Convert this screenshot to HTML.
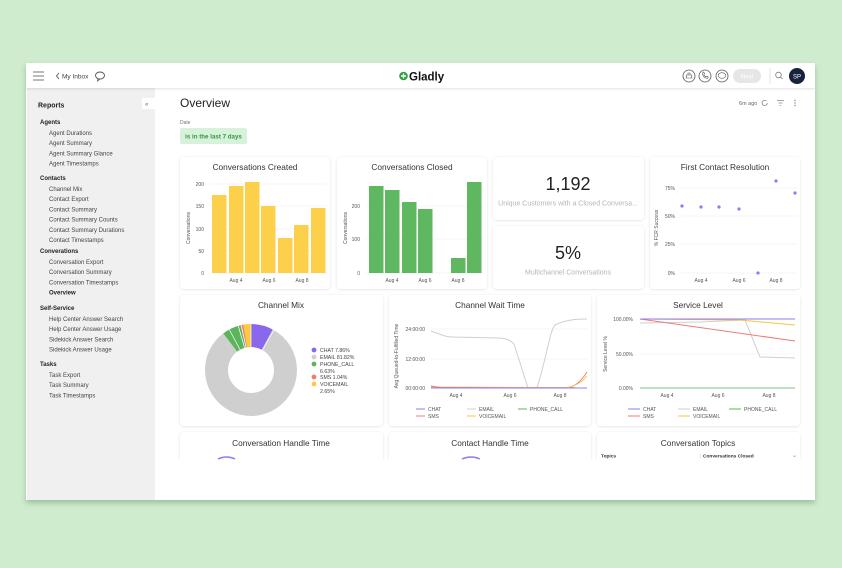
<!DOCTYPE html>
<html><head><meta charset="utf-8"><style>
html,body{margin:0;padding:0;background:#cfecce;width:842px;height:568px;overflow:hidden}
svg{display:block;font-family:"Liberation Sans",sans-serif}
</style></head><body>
<svg width="842" height="568" viewBox="0 0 842 568" xmlns="http://www.w3.org/2000/svg">
<defs>
<filter id="ws" x="-5%" y="-5%" width="110%" height="115%"><feDropShadow dx="0" dy="3" stdDeviation="3" flood-color="#5a8a5a" flood-opacity="0.45"/></filter>
<filter id="cs" x="-5%" y="-5%" width="110%" height="110%"><feDropShadow dx="0" dy="0.5" stdDeviation="1.2" flood-color="#000" flood-opacity="0.13"/></filter>
<filter id="ts" x="0" y="0" width="100%" height="200%"><feDropShadow dx="0" dy="1" stdDeviation="1.2" flood-color="#000" flood-opacity="0.12"/></filter>
</defs>
<rect width="842" height="568" rx="14" fill="#cfecce"/>
<!-- window -->
<rect x="26" y="63" width="789" height="437" fill="#fff" filter="url(#ws)"/>
<rect x="27" y="88" width="128" height="412" fill="#f0f0f0"/>
<!-- top bar -->
<rect x="26" y="63" width="789" height="25" fill="#fff" filter="url(#ts)"/>
<g stroke="#777" stroke-width="1"><line x1="33" y1="72" x2="44" y2="72"/><line x1="33" y1="76" x2="44" y2="76"/><line x1="33" y1="80" x2="44" y2="80"/></g>
<path d="M59 73 L56.5 76 L59 79" fill="none" stroke="#555" stroke-width="0.9"/>
<text x="62" y="78.5" font-size="6.5" fill="#444">My Inbox</text>
<ellipse cx="100" cy="75.5" rx="4.5" ry="3.5" fill="none" stroke="#555" stroke-width="0.9"/>
<path d="M98 78.5 L97.5 81 L100 79" fill="none" stroke="#555" stroke-width="0.8"/>
<circle cx="403.5" cy="76" r="4.3" fill="#2e9e3e"/>
<path d="M401 76 H406 M403.5 73.5 V78.5" stroke="#fff" stroke-width="1.4"/>
<text x="409" y="80.5" font-size="11.5" font-weight="bold" fill="#111">Gladly</text>
<g fill="none" stroke="#555" stroke-width="0.8"><circle cx="689" cy="76" r="6"/><circle cx="705" cy="76" r="6"/><circle cx="722" cy="76" r="6"/></g>
<path d="M685.5 78 h7 M686.5 78 v-3 h5 v3 M688 75 v-2 h2 v2" fill="none" stroke="#555" stroke-width="0.6"/>
<path d="M702.5 73 c0 3 2 5 5 5.5 l0.8-1.5 -1.5-1 -1 .8 c-1-.5-1.7-1.3-2-2.3 l.8-1 -1-1.5z" fill="none" stroke="#555" stroke-width="0.6"/>
<ellipse cx="722" cy="75.5" rx="3.8" ry="2.8" fill="none" stroke="#555" stroke-width="0.6"/>
<rect x="733" y="69" width="28" height="14" rx="7" fill="#e6e6e6"/>
<text x="747" y="78.5" font-size="6" fill="#fff" text-anchor="middle">Next</text>
<line x1="770" y1="68" x2="770" y2="84" stroke="#e3e3e3"/>
<circle cx="778.5" cy="75" r="2.8" fill="none" stroke="#777" stroke-width="0.8"/><line x1="780.5" y1="77" x2="782.5" y2="79" stroke="#777" stroke-width="0.8"/>
<circle cx="797" cy="76" r="8" fill="#18223d"/>
<text x="797" y="78.3" font-size="6" fill="#fff" text-anchor="middle">SP</text>
<!-- sidebar -->
<g font-size="6" fill="#444">
<text x="38" y="107.5" font-size="7" font-weight="bold" fill="#222">Reports</text>
<rect x="142" y="98" width="13" height="11" fill="#fff"/>
<text x="145" y="106" font-size="6" fill="#666">«</text>
<g font-weight="bold" fill="#222" font-size="6"><text x="40" y="124">Agents</text><text x="40" y="180">Contacts</text><text x="40" y="253">Converations</text><text x="40" y="310">Self-Service</text><text x="40" y="366">Tasks</text></g>
<text x="49" y="135">Agent Durations</text><text x="49" y="145.2">Agent Summary</text><text x="49" y="155.4">Agent Summary Glance</text><text x="49" y="165.6">Agent Timestamps</text>
<text x="49" y="191">Channel Mix</text><text x="49" y="201.2">Contact Export</text><text x="49" y="211.4">Contact Summary</text><text x="49" y="221.6">Contact Summary Counts</text><text x="49" y="231.8">Contact Summary Durations</text><text x="49" y="242">Contact Timestamps</text>
<text x="49" y="264">Conversation Export</text><text x="49" y="274.2">Conversation Summary</text><text x="49" y="284.4">Conversation Timestamps</text><text x="49" y="294.6" font-weight="bold" fill="#222">Overview</text>
<text x="49" y="321">Help Center Answer Search</text><text x="49" y="331.2">Help Center Answer Usage</text><text x="49" y="341.4">Sidekick Answer Search</text><text x="49" y="351.6">Sidekick Answer Usage</text>
<text x="49" y="377">Task Export</text><text x="49" y="387.2">Task Summary</text><text x="49" y="397.4">Task Timestamps</text>
</g>
<!-- header -->
<text x="180" y="107" font-size="12" fill="#222">Overview</text>
<text x="180" y="124" font-size="5" fill="#777">Date</text>
<rect x="180" y="128" width="67" height="16" rx="2" fill="#d8f1da"/>
<text x="213.5" y="138.5" font-size="6.2" fill="#2e9a3e" text-anchor="middle" font-weight="bold">is in the last 7 days</text>
<text x="739" y="105" font-size="5.5" fill="#666">6m ago</text>
<path d="M766.5 101 a2.6 2.6 0 1 0 .8 2" fill="none" stroke="#777" stroke-width="0.7"/>
<path d="M777 100.5 h7 M778.5 103 h4 M779.8 105.5 h1.4" stroke="#888" stroke-width="0.7"/>
<g fill="#888"><circle cx="795" cy="100.5" r="0.7"/><circle cx="795" cy="103" r="0.7"/><circle cx="795" cy="105.5" r="0.7"/></g>
<!-- cards -->
<g fill="#fff" filter="url(#cs)">
<rect x="180" y="157" width="150" height="132" rx="4"/><rect x="337" y="157" width="150" height="132" rx="4"/>
<rect x="493" y="157" width="151" height="63" rx="4"/><rect x="493" y="226" width="151" height="63" rx="4"/>
<rect x="650" y="157" width="150" height="132" rx="4"/>
<rect x="180" y="295" width="203" height="131" rx="4"/><rect x="389" y="295" width="202" height="131" rx="4"/><rect x="597" y="295" width="203" height="131" rx="4"/>
<rect x="180" y="432" width="203" height="40" rx="4"/><rect x="389" y="432" width="202" height="40" rx="4"/><rect x="597" y="432" width="203" height="40" rx="4"/>
</g>
<rect x="156" y="459" width="659" height="41" fill="#fff"/>
<g font-size="8.3" fill="#333" text-anchor="middle">
<text x="255" y="170">Conversations Created</text><text x="412" y="170">Conversations Closed</text><text x="725" y="170">First Contact Resolution</text>
<text x="281" y="308">Channel Mix</text><text x="490" y="308">Channel Wait Time</text><text x="698" y="308">Service Level</text>
<text x="281" y="446">Conversation Handle Time</text><text x="490" y="446">Contact Handle Time</text><text x="698" y="446">Conversation Topics</text>
</g>
<!-- card1 -->
<g stroke="#eee" stroke-width="0.6"><line x1="210" y1="184" x2="327" y2="184"/><line x1="210" y1="206" x2="327" y2="206"/><line x1="210" y1="229" x2="327" y2="229"/><line x1="210" y1="251" x2="327" y2="251"/><line x1="210" y1="273" x2="327" y2="273"/></g>
<g font-size="5" fill="#555" text-anchor="end"><text x="204" y="186">200</text><text x="204" y="208">150</text><text x="204" y="231">100</text><text x="204" y="253">50</text><text x="204" y="275">0</text></g>
<text transform="translate(190,228) rotate(-90)" font-size="5" fill="#555" text-anchor="middle">Conversations</text>
<g fill="#fdd04b"><rect x="212" y="195" width="14.5" height="78"/><rect x="229" y="186" width="14.5" height="87"/><rect x="245" y="182" width="14.5" height="91"/><rect x="261" y="206" width="14.5" height="67"/><rect x="278" y="238" width="14.5" height="35"/><rect x="294" y="225" width="14.5" height="48"/><rect x="311" y="208" width="14.5" height="65"/></g>
<g font-size="5" fill="#555" text-anchor="middle"><text x="236" y="282">Aug 4</text><text x="269" y="282">Aug 6</text><text x="302" y="282">Aug 8</text></g>
<!-- card2 -->
<g stroke="#eee" stroke-width="0.6"><line x1="366" y1="206" x2="484" y2="206"/><line x1="366" y1="239" x2="484" y2="239"/><line x1="366" y1="273" x2="484" y2="273"/></g>
<g font-size="5" fill="#555" text-anchor="end"><text x="360" y="208">200</text><text x="360" y="241">100</text><text x="360" y="275">0</text></g>
<text transform="translate(347,228) rotate(-90)" font-size="5" fill="#555" text-anchor="middle">Conversations</text>
<g fill="#5fb760"><rect x="369" y="186" width="14.5" height="87"/><rect x="385" y="190" width="14.5" height="83"/><rect x="402" y="202" width="14.5" height="71"/><rect x="418" y="209" width="14.5" height="64"/><rect x="451" y="258" width="14.5" height="15"/><rect x="467" y="182" width="14.5" height="91"/></g>
<g font-size="5" fill="#555" text-anchor="middle"><text x="392" y="282">Aug 4</text><text x="425" y="282">Aug 6</text><text x="458" y="282">Aug 8</text></g>
<!-- card3 -->
<text x="568" y="190" font-size="18" fill="#222" text-anchor="middle">1,192</text>
<text x="568" y="205.5" font-size="7" fill="#b5b5b5" text-anchor="middle">Unique Customers with a Closed Conversa...</text>
<text x="568" y="259" font-size="18" fill="#222" text-anchor="middle">5%</text>
<text x="568" y="274.5" font-size="7" fill="#b5b5b5" text-anchor="middle">Multichannel Conversations</text>
<!-- card4 -->
<g stroke="#eee" stroke-width="0.6"><line x1="681" y1="188" x2="797" y2="188"/><line x1="681" y1="216" x2="797" y2="216"/><line x1="681" y1="244" x2="797" y2="244"/><line x1="681" y1="273" x2="797" y2="273"/></g>
<g font-size="5" fill="#555" text-anchor="end"><text x="675" y="190">75%</text><text x="675" y="218">50%</text><text x="675" y="246">25%</text><text x="675" y="275">0%</text></g>
<text transform="translate(658,228) rotate(-90)" font-size="5" fill="#555" text-anchor="middle">% FCR Success</text>
<g fill="#8b7cf6"><circle cx="682" cy="206" r="1.6"/><circle cx="701" cy="207" r="1.6"/><circle cx="719" cy="207" r="1.6"/><circle cx="739" cy="209" r="1.6"/><circle cx="758" cy="273" r="1.6"/><circle cx="776" cy="181" r="1.6"/><circle cx="795" cy="193" r="1.6"/></g>
<g font-size="5" fill="#555" text-anchor="middle"><text x="701" y="282">Aug 4</text><text x="739" y="282">Aug 6</text><text x="776" y="282">Aug 8</text></g>
<!-- donut -->
<g transform="rotate(-90 251 370)" fill="none" stroke-width="23">
<circle cx="251" cy="370" r="34.5" pathLength="100" stroke="#8a68ee" stroke-dasharray="7.86 100"/>
<circle cx="251" cy="370" r="34.5" pathLength="100" stroke="#cfcfcf" stroke-dasharray="81.82 100" stroke-dashoffset="-7.86"/>
<circle cx="251" cy="370" r="34.5" pathLength="100" stroke="#5cb55c" stroke-dasharray="6.63 100" stroke-dashoffset="-89.68"/>
<circle cx="251" cy="370" r="34.5" pathLength="100" stroke="#f07a78" stroke-dasharray="1.04 100" stroke-dashoffset="-96.31"/>
<circle cx="251" cy="370" r="34.5" pathLength="100" stroke="#fccb3c" stroke-dasharray="2.65 100" stroke-dashoffset="-97.35"/>
</g>
<g stroke="#fff" stroke-width="0.7"><line x1="251" y1="370" x2="251" y2="323"/><line x1="251" y1="370" x2="274" y2="330"/><line x1="251" y1="370" x2="229" y2="329"/><line x1="251" y1="370" x2="238" y2="325"/><line x1="251" y1="370" x2="241" y2="324"/></g>
<g font-size="5.2" fill="#444">
<circle cx="314" cy="350" r="2.4" fill="#8a68ee"/><text x="320" y="352">CHAT 7.86%</text>
<circle cx="314" cy="357" r="2.4" fill="#cfcfcf"/><text x="320" y="359">EMAIL 81.82%</text>
<circle cx="314" cy="364" r="2.4" fill="#5cb55c"/><text x="320" y="366">PHONE_CALL</text><text x="320" y="373">6.63%</text>
<circle cx="314" cy="377" r="2.4" fill="#f07a78"/><text x="320" y="379">SMS 1.04%</text>
<circle cx="314" cy="384" r="2.4" fill="#fccb3c"/><text x="320" y="386">VOICEMAIL</text><text x="320" y="393">2.65%</text>
</g>
<!-- wait time -->
<g stroke="#eee" stroke-width="0.6"><line x1="431" y1="329" x2="587" y2="329"/><line x1="431" y1="359" x2="587" y2="359"/><line x1="431" y1="388" x2="587" y2="388"/></g>
<g font-size="5" fill="#555" text-anchor="end"><text x="425" y="331">24:00:00</text><text x="425" y="361">12:00:00</text><text x="425" y="390">00:00:00</text></g>
<text transform="translate(398,356) rotate(-90)" font-size="5" fill="#555" text-anchor="middle">Avg Queued-to-Fulfilled Time</text>
<path d="M431 331 C440 334 445 337 452 337 L498 338 C506 338 510 340 514 344 L528 388 L537 388 C546 360 550 330 555 325 C565 320 575 319 587 319" fill="none" stroke="#cfcfcf" stroke-width="1"/>
<path d="M431 387 L575 387.5" stroke="#f7c443" stroke-width="0.9"/>
<path d="M431 386 L440 387.5 L568 388 C576 386 582 380 587 372" fill="none" stroke="#f07a78" stroke-width="0.9"/>
<path d="M565 388 C576 386 582 382 587 376" fill="none" stroke="#f7c443" stroke-width="0.9"/>
<path d="M431 388 L587 388" stroke="#8a7cf6" stroke-width="0.9"/>
<g font-size="5" fill="#555" text-anchor="middle"><text x="456" y="397">Aug 4</text><text x="510" y="397">Aug 6</text><text x="560" y="397">Aug 8</text></g>
<g font-size="5" fill="#555">
<line x1="416" y1="409" x2="425" y2="409" stroke="#8a7cf6"/><text x="428" y="411">CHAT</text>
<line x1="467" y1="409" x2="476" y2="409" stroke="#cfcfcf"/><text x="479" y="411">EMAIL</text>
<line x1="518" y1="409" x2="527" y2="409" stroke="#5cb55c"/><text x="530" y="411">PHONE_CALL</text>
<line x1="416" y1="416" x2="425" y2="416" stroke="#f07a78"/><text x="428" y="418">SMS</text>
<line x1="467" y1="416" x2="476" y2="416" stroke="#f7c443"/><text x="479" y="418">VOICEMAIL</text>
</g>
<!-- service level -->
<g stroke="#eee" stroke-width="0.6"><line x1="640" y1="319" x2="795" y2="319"/><line x1="640" y1="354" x2="795" y2="354"/><line x1="640" y1="388" x2="795" y2="388"/></g>
<g font-size="5" fill="#555" text-anchor="end"><text x="633" y="321">100.00%</text><text x="633" y="356">50.00%</text><text x="633" y="390">0.00%</text></g>
<text transform="translate(607,354) rotate(-90)" font-size="5" fill="#555" text-anchor="middle">Service Level %</text>
<path d="M640 323 L700 322 L745 320 L760 357 L795 358" fill="none" stroke="#cfcfcf" stroke-width="1"/>
<path d="M640 319 L740 320 L795 325" fill="none" stroke="#f7c443" stroke-width="1"/>
<path d="M640 319 L795 341" stroke="#f07a78" stroke-width="1"/>
<path d="M640 319 L795 319" stroke="#8a7cf6" stroke-width="1"/>
<path d="M640 388 L795 388" stroke="#7cc47c" stroke-width="1"/>
<g font-size="5" fill="#555" text-anchor="middle"><text x="667" y="397">Aug 4</text><text x="718" y="397">Aug 6</text><text x="769" y="397">Aug 8</text></g>
<g font-size="5" fill="#555">
<line x1="628" y1="409" x2="640" y2="409" stroke="#8a7cf6"/><text x="643" y="411">CHAT</text>
<line x1="678" y1="409" x2="690" y2="409" stroke="#cfcfcf"/><text x="693" y="411">EMAIL</text>
<line x1="729" y1="409" x2="741" y2="409" stroke="#5cb55c"/><text x="744" y="411">PHONE_CALL</text>
<line x1="628" y1="416" x2="640" y2="416" stroke="#f07a78"/><text x="643" y="418">SMS</text>
<line x1="678" y1="416" x2="690" y2="416" stroke="#f7c443"/><text x="693" y="418">VOICEMAIL</text>
</g>
<!-- bottom row partials -->
<path d="M218 459 Q226.5 455 235 459" fill="none" stroke="#8a7cf6" stroke-width="1.5"/>
<path d="M462 459 Q471 455 480 459" fill="none" stroke="#8a7cf6" stroke-width="1.5"/>
<text x="601" y="457.5" font-size="4.8" font-weight="bold" fill="#333">Topics</text>
<line x1="700" y1="453" x2="700" y2="459" stroke="#ddd" stroke-width="0.5"/>
<text x="703" y="457.5" font-size="4.8" font-weight="bold" fill="#333">Conversations Closed</text>
<path d="M793 455.5 l1.5 1.5 1.5-1.5" fill="none" stroke="#777" stroke-width="0.5"/>
</svg>
</body></html>
